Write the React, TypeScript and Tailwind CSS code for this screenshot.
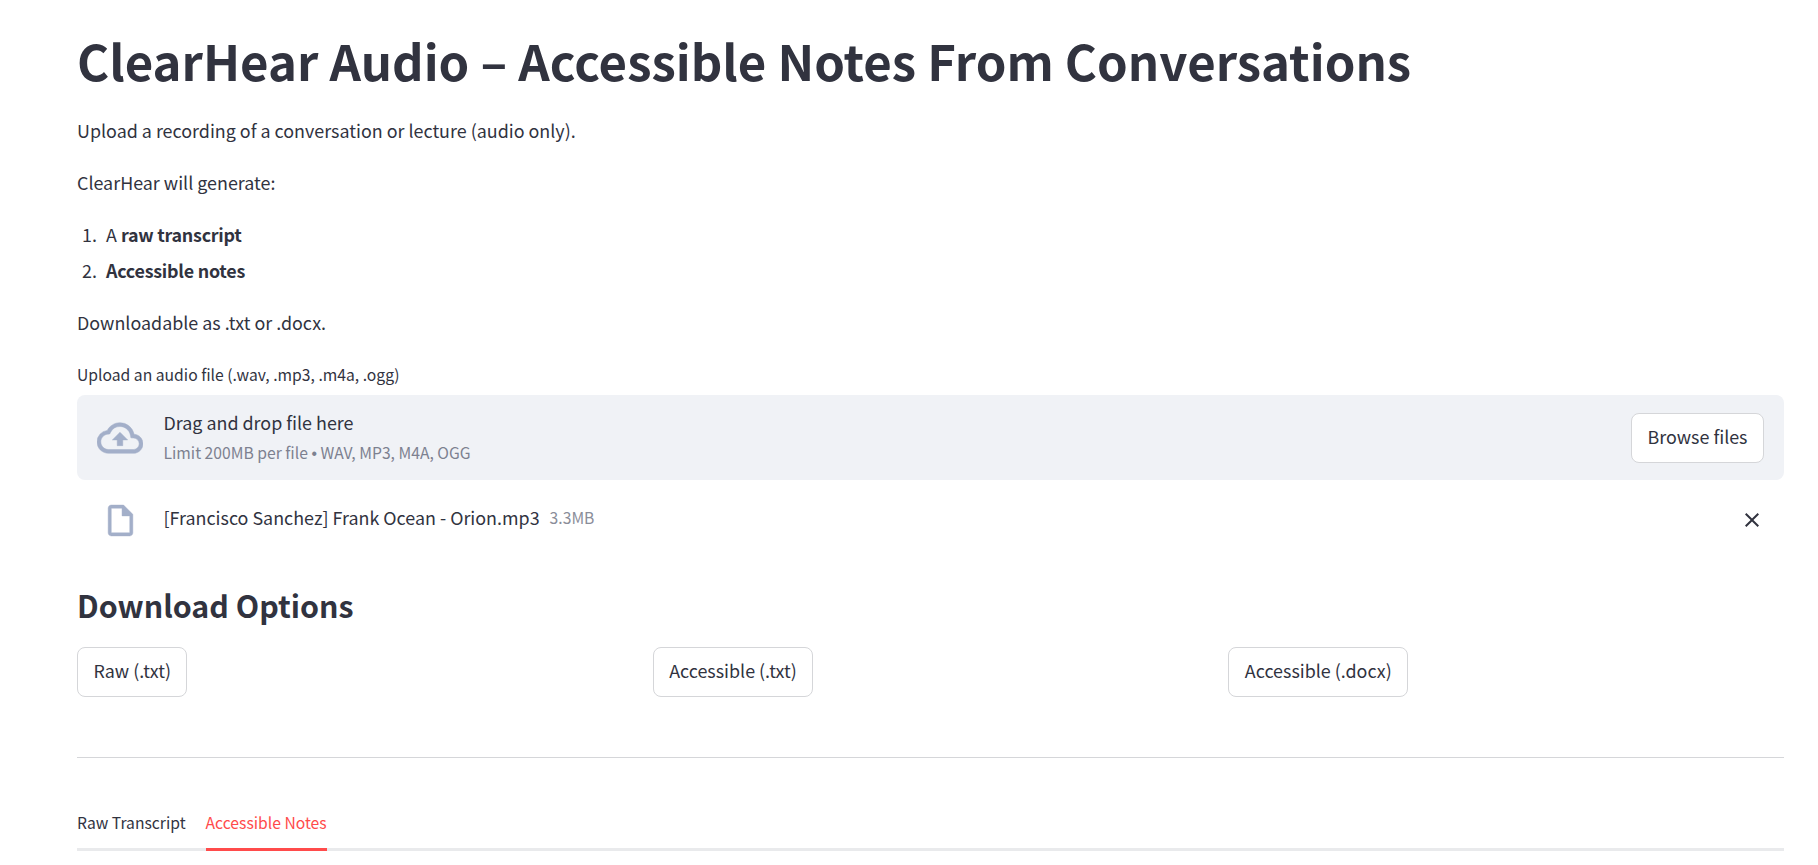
const font = 'font-["Noto_Sans_CJK_SC",sans-serif]';

function OutlineButton({ label, big }: { label: string; big?: boolean }) {
  return (
    <button className={`h-[50px] rounded-[8px] border border-[#d5d6d9] bg-white px-[15.5px] pb-[3px] text-[17.9px] leading-[24px] text-[#31333f] ${big ? 'shrink-0' : ''}`}>
      {label}
    </button>
  );
}

function CloudIcon() {
  return (
    <svg width="46" height="46" viewBox="0 0 24 24" fill="#a3afc9" stroke="#a3afc9" strokeWidth="0.25" aria-hidden="true">
      <path d="M19.35 10.04A7.49 7.49 0 0 0 12 4C9.11 4 6.6 5.64 5.35 8.04A5.994 5.994 0 0 0 0 14c0 3.31 2.69 6 6 6h13c2.76 0 5-2.24 5-5 0-2.64-2.05-4.78-4.65-4.96zM19 18H6c-2.21 0-4-1.79-4-4 0-2.05 1.53-3.76 3.56-3.97l1.07-.11.5-.95A5.469 5.469 0 0 1 12 6c2.62 0 4.88 1.86 5.39 4.43l.3 1.5 1.53.11A2.98 2.98 0 0 1 22 15c0 1.65-1.35 3-3 3zM8 13h2.55v3h2.9v-3H16l-4-4z" />
    </svg>
  );
}

function FileIcon() {
  return (
    <svg width="37" height="37" viewBox="0 0 24 24" fill="#a3afc9" stroke="#a3afc9" strokeWidth="0.3" aria-hidden="true">
      <path d="M14 2H6c-1.1 0-1.99.9-1.99 2L4 20c0 1.1.89 2 1.99 2H18c1.1 0 2-.9 2-2V8l-6-6zM6 20V4h7v5h5v11H6z" />
    </svg>
  );
}

function CloseIcon() {
  return (
    <svg width="24" height="24" viewBox="0 0 24 24" fill="#31333f" aria-hidden="true">
      <path d="M19 6.41 17.59 5 12 10.59 6.41 5 5 6.41 10.59 12 5 17.59 6.41 19 12 13.41 17.59 19 19 17.59 13.41 12z" />
    </svg>
  );
}

export default function App() {
  return (
    <main className={`h-[865px] overflow-hidden bg-white pl-[77px] pr-[34px] text-[#31333f] ${font}`}>
      <h1 className="pt-[28px] text-[49.1px] leading-[64px] font-bold">
        ClearHear Audio – Accessible Notes From Conversations
      </h1>

      <div className="mt-[24px] text-[17.9px] leading-[29px]">
        <p>Upload a recording of a conversation or lecture (audio only).</p>
        <p className="mt-[23px]">ClearHear will generate:</p>
        <ol className="mt-[23px]">
          <li className="flex">
            <span className="w-[29px] pl-[5px]">1.</span>
            <span>A <strong className="font-semibold tracking-[-0.25px]">raw transcript</strong></span>
          </li>
          <li className="mt-[7px] flex">
            <span className="w-[29px] pl-[5px]">2.</span>
            <strong className="font-semibold tracking-[-0.25px]">Accessible notes</strong>
          </li>
        </ol>
        <p className="mt-[23px]">Downloadable as .txt or .docx.</p>
      </div>

      <label className="mt-[26px] block text-[15.7px] leading-[24px]">Upload an audio file (.wav, .mp3, .m4a, .ogg)</label>
      <section className="mt-[8px] flex h-[85px] items-center rounded-[8px] bg-[#f0f2f6] pr-[20px] pl-[20px]">
        <CloudIcon />
        <div className="ml-[20.5px] flex-1 pb-[2px]">
          <div className="text-[17.9px] leading-[28px]">Drag and drop file here</div>
          <div className="mt-[6px] text-[15.7px] leading-[22px] text-[#7d8190]">
            Limit 200MB per file <span className="font-['Liberation_Sans',sans-serif]">•</span> WAV, MP3, M4A, OGG
          </div>
        </div>
        <OutlineButton label="Browse files" big />
      </section>

      <div className="mt-[16px] flex h-[48px] items-center pr-[20px] pl-[25px]">
        <FileIcon />
        <span className="ml-[24.5px] pb-[6px] text-[17.9px] leading-[28px]">[Francisco Sanchez] Frank Ocean - Orion.mp3</span>
        <span className="ml-[10px] pb-[4px] text-[15.7px] text-[#8a8d99]">3.3MB</span>
        <span className="ml-auto"><CloseIcon /></span>
      </div>

      <h2 className="mt-[39px] text-[30.4px] leading-[44px] font-semibold">Download Options</h2>

      <div className="mt-[19.5px] grid grid-cols-3 gap-[20px]">
        <div><OutlineButton label="Raw (.txt)" /></div>
        <div><OutlineButton label="Accessible (.txt)" /></div>
        <div><OutlineButton label="Accessible (.docx)" /></div>
      </div>

      <hr className="mt-[60px] border-t border-[#d5d6d9]" />

      <nav className="mt-[40px] flex h-[53px] gap-[20px] border-b-[3px] border-[#e9eaec] text-[15.7px] leading-[24px]">
        <button className="-mb-[3px] h-[53px] border-b-[3px] border-transparent">Raw Transcript</button>
        <button className="-mb-[3px] h-[53px] border-b-[3px] border-[#ff4b4b] text-[#ff4b4b]">Accessible Notes</button>
      </nav>
    </main>
  );
}
